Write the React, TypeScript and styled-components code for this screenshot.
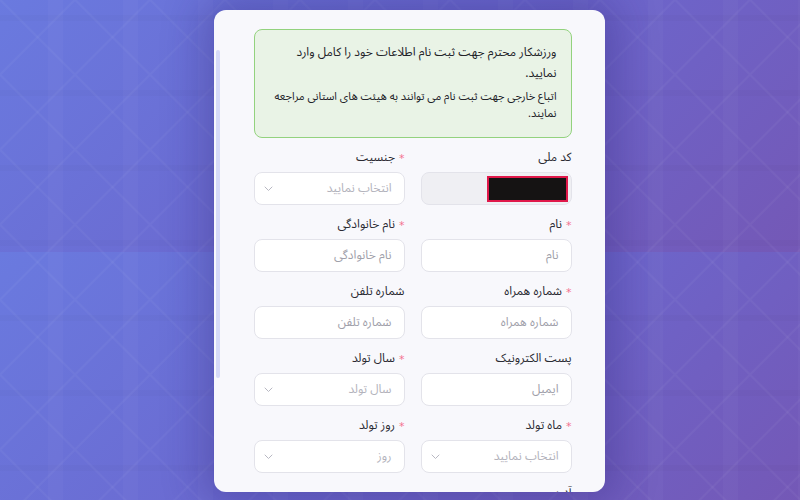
import React from 'react';
import styled, { createGlobalStyle } from 'styled-components';

const GlobalStyle = createGlobalStyle`
  html, body {
    margin: 0;
    padding: 0;
    height: 100%;
    overflow: hidden;
  }
  body {
    font-family: 'Noto Sans Arabic', 'DejaVu Sans', 'Noto Sans', sans-serif;
  }
  * {
    box-sizing: border-box;
  }
`;

const Page = styled.div`
  height: 100vh;
  display: flex;
  justify-content: center;
  align-items: flex-start;
  padding: 10px 0 0 18px;
  background-color: #6a6bd0;
  background-image:
    linear-gradient(45deg, transparent 49%, rgba(255, 255, 255, 0.035) 49.5% 51%, transparent 51.5%),
    linear-gradient(-45deg, transparent 49%, rgba(255, 255, 255, 0.035) 49.5% 51%, transparent 51.5%),
    linear-gradient(90deg, transparent 48px, rgba(255, 255, 255, 0.025) 48px 63px, transparent 63px),
    linear-gradient(0deg, transparent 54px, rgba(0, 0, 0, 0.02) 54px 60px, transparent 60px),
    linear-gradient(135deg, #6a7adf 0%, #6b68cf 50%, #7458b6 100%);
  background-size: 75px 75px, 75px 75px, 75px 75px, 75px 75px, 800px 252px;
`;

const Card = styled.div`
  position: relative;
  direction: rtl;
  width: 391px;
  height: 482px;
  background: #f8f8fc;
  border-radius: 12px;
  box-shadow: 0 0 40px 12px rgba(40, 28, 110, 0.3);
  overflow: hidden;
  padding: 19px 33px 24px 40px;

  /* scroll thumb of the form panel */
  &::before {
    content: '';
    position: absolute;
    left: 2px;
    top: 40px;
    width: 4px;
    height: 328px;
    border-radius: 2px;
    background: #d6daf8;
  }
`;

const Alert = styled.div`
  background: #e9f3e6;
  border: 1px solid #93d27e;
  border-radius: 8px;
  padding: 12px 14px 15px;
  margin-bottom: 12px;
  color: #222228;
`;

const AlertTitle = styled.p`
  margin: 0 0 4px;
  font-size: 12px;
  line-height: 21px;
`;

const AlertNote = styled.p`
  margin: 0;
  font-size: 11px;
  line-height: 17px;
`;

const FormGrid = styled.div`
  display: grid;
  grid-template-columns: 1fr 1fr;
  column-gap: 16px;
  row-gap: 12px;
`;

const Field = styled.div<{ $wide?: boolean }>`
  display: flex;
  flex-direction: column;
  gap: 6px;
  grid-column: ${(p) => (p.$wide ? '1 / -1' : 'auto')};
`;

const Label = styled.label`
  display: flex;
  align-items: center;
  font-size: 12px;
  line-height: 16px;
  color: #2a2a32;
`;

const Star = styled.span`
  font-family: 'DejaVu Sans', sans-serif;
  font-size: 11px;
  line-height: 10px;
  color: #f4728e;
  margin-left: 4px;
  padding-top: 2px;
`;

const Input = styled.input`
  height: 33px;
  width: 100%;
  border: 1px solid #e3e3ea;
  border-radius: 8px;
  background: #ffffff;
  padding: 0 12px;
  font-family: inherit;
  font-size: 12px;
  color: #2a2a32;
  direction: rtl;
  outline: none;

  &::placeholder {
    color: #a0a0aa;
  }
`;

const LockedBox = styled.div`
  height: 33px;
  border: 1px solid #e3e3ea;
  border-radius: 8px;
  background: #efeff3;
  display: flex;
  align-items: center;
  padding: 0 3px;
`;

const Masked = styled.span`
  width: 81px;
  height: 26px;
  background: #151313;
  border: 2px solid #e0184a;
`;

const SelectBox = styled.div`
  height: 33px;
  border: 1px solid #e3e3ea;
  border-radius: 8px;
  background: #ffffff;
  display: flex;
  align-items: center;
  justify-content: space-between;
  padding: 0 12px 0 9px;
  font-size: 12px;
  color: #b3b3bc;
`;

const TextArea = styled.textarea`
  height: 80px;
  width: 100%;
  border: 1px solid #e3e3ea;
  border-radius: 8px;
  background: #ffffff;
  resize: none;
  padding: 8px 12px;
  font-family: inherit;
  font-size: 12px;
  direction: rtl;
  outline: none;
`;

const Chevron = () => (
  <svg width="9" height="6" viewBox="0 0 9 6" fill="none">
    <path d="M1 1l3.5 3.5L8 1" stroke="#b8b8c2" strokeWidth="1" strokeLinecap="round" strokeLinejoin="round" />
  </svg>
);

type FieldDef = {
  label: string;
  required?: boolean;
  kind: 'input' | 'select' | 'locked';
  placeholder?: string;
};

const fields: FieldDef[] = [
  { label: 'کد ملی', kind: 'locked' },
  { label: 'جنسیت', required: true, kind: 'select', placeholder: 'انتخاب نمایید' },
  { label: 'نام', required: true, kind: 'input', placeholder: 'نام' },
  { label: 'نام خانوادگی', required: true, kind: 'input', placeholder: 'نام خانوادگی' },
  { label: 'شماره همراه', required: true, kind: 'input', placeholder: 'شماره همراه' },
  { label: 'شماره تلفن', kind: 'input', placeholder: 'شماره تلفن' },
  { label: 'پست الکترونیک', kind: 'input', placeholder: 'ایمیل' },
  { label: 'سال تولد', required: true, kind: 'select', placeholder: 'سال تولد' },
  { label: 'ماه تولد', required: true, kind: 'select', placeholder: 'انتخاب نمایید' },
  { label: 'روز تولد', required: true, kind: 'select', placeholder: 'روز' },
];

function renderControl(f: FieldDef) {
  if (f.kind === 'locked') {
    return (
      <LockedBox>
        <Masked />
      </LockedBox>
    );
  }
  if (f.kind === 'select') {
    return (
      <SelectBox>
        <span>{f.placeholder}</span>
        <Chevron />
      </SelectBox>
    );
  }
  return <Input placeholder={f.placeholder} />;
}

export default function App(): React.ReactElement {
  return (
    <>
      <GlobalStyle />
      <Page>
        <Card>
          <Alert>
            <AlertTitle>
              ورزشکار محترم جهت ثبت نام اطلاعات خود را کامل وارد
              <br />
              نمایید.
            </AlertTitle>
            <AlertNote>
              اتباع خارجی جهت ثبت نام می توانند به هیئت های استانی مراجعه
              <br />
              نمایند.
            </AlertNote>
          </Alert>
          <FormGrid>
            {fields.map((f) => (
              <Field key={f.label}>
                <Label>
                  {f.required && <Star>*</Star>}
                  {f.label}
                </Label>
                {renderControl(f)}
              </Field>
            ))}
            <Field $wide>
              <Label>آدرس</Label>
              <TextArea />
            </Field>
          </FormGrid>
        </Card>
      </Page>
    </>
  );
}
